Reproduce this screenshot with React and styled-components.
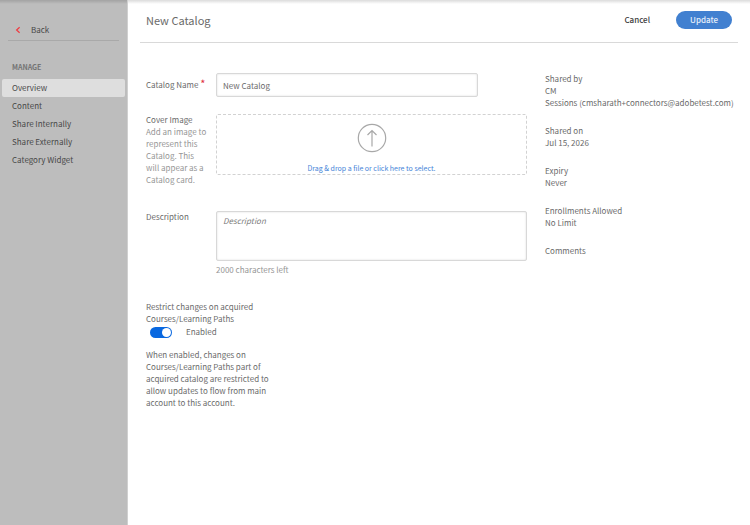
import { useState } from "react";
import styled, { createGlobalStyle } from "styled-components";

const GlobalStyle = createGlobalStyle`
    * {
        box-sizing: border-box;
    }
    body {
        margin: 0;
        background-color: #fff;
        color: #6a6a6a;
        font-family: "Noto Sans CJK SC", "Noto Sans", sans-serif;
        font-size: 8px;
        line-height: 12px;
    }
    input, textarea, button {
        font: inherit;
        color: inherit;
    }
`

const Container = styled.div`
    display: flex;
    min-height: 100vh;
    background: linear-gradient(rgba(0, 0, 0, 0.14), transparent) no-repeat top / 100% 4px;
`

const Sidebar = styled.nav`
    flex: 0 0 128px;
    padding-top: 24px;
    border-right: 1px solid #d0d0d0;
    background: linear-gradient(rgba(0, 0, 0, 0.14), transparent) no-repeat top / 100% 4px, #bdbdbd;
    color: #484848;
`

const Back = styled.a`
    display: flex;
    align-items: center;
    gap: 10px;
    margin: 0 8px;
    padding: 0 0 4px 7px;
    border-bottom: 1px solid #a9a9a9;
    color: inherit;
    text-decoration: none;
`

const MenuTitle = styled.h2`
    margin: 20px 0 6px 12px;
    color: #747474;
    font-size: 7px;
    line-height: 12px;
    font-weight: 700;
    text-transform: uppercase;
`

const Menu = styled.ul`
    margin: 0 2px;
    padding: 0;
    list-style: none;
`

const MenuLink = styled.a`
    display: block;
    padding: 3px 10px;
    border-radius: 2px;
    background-color: ${(props) => (props.$active ? "#dedede" : "transparent")};
    color: inherit;
    text-decoration: none;
`

const Main = styled.main`
    flex: 1;
    min-width: 0;
    padding: 0 12px;
`

const Header = styled.header`
    display: flex;
    align-items: center;
    height: 43px;
    padding: 0 6px 2px;
    border-bottom: 1px solid #d9d9d9;
`

const Title = styled.h1`
    margin: 0 auto 0 0;
    font-size: 11px;
    line-height: 16px;
    font-weight: 400;
`

const Button = styled.button`
    height: 18px;
    padding: 0 14px;
    border: none;
    border-radius: 9px;
    background-color: ${(props) => (props.$primary ? "#4180d0" : "transparent")};
    color: ${(props) => (props.$primary ? "#e6effa" : "#3c3c3c")};
    font-weight: 500;
    line-height: 18px;
    cursor: pointer;
`

const Actions = styled.div`
    display: flex;
    gap: 12px;
`

const Content = styled.div`
    display: grid;
    grid-template-columns: minmax(0, 381px) minmax(0, 1fr);
    column-gap: 18px;
    padding: 30px 6px;
`

const Field = styled.div`
    display: grid;
    grid-template-columns: 64px minmax(0, 1fr);
    column-gap: 6px;
    margin-bottom: ${(props) => props.$space};
`

const Label = styled.label`
    display: block;
    padding-top: ${(props) => (props.$centered ? "6px" : "0")};
    white-space: nowrap;
`

const Required = styled.span`
    color: #e0303a;
    font-size: 11px;
    line-height: 8px;
`

const Hint = styled.p`
    margin: 0;
    color: #969696;
`

const Counter = styled(Hint)`
    margin-top: 3px;
`

const Input = styled.input`
    width: 262px;
    max-width: 100%;
    height: 24px;
    padding: 0 6px;
    border: 1px solid #d8d8d8;
    border-radius: 2px;
    box-shadow: inset 0 0 2px #d8d8d8;
    outline: none;
`

const TextArea = styled.textarea`
    display: block;
    width: 100%;
    height: 50px;
    padding: 3px 6px;
    border: 1px solid #d8d8d8;
    border-radius: 2px;
    box-shadow: inset 0 0 2px #d8d8d8;
    outline: none;
    resize: none;
    &::placeholder {
        color: #7d7d7d;
        font-style: italic;
    }
`

const DropZone = styled.button`
    display: flex;
    flex-direction: column;
    align-items: center;
    justify-content: space-between;
    height: 61px;
    padding: 8px 0 0;
    border: 1px dashed #d2d2d2;
    border-radius: 2px;
    background-color: transparent;
    color: #4384d8;
    font-size: 7px;
    cursor: pointer;
`

const Restrict = styled.section`
    width: 126px;
`

const ToggleRow = styled.label`
    display: flex;
    align-items: center;
    gap: 14px;
    margin: 1px 0 11px;
    padding-left: 4px;
`

const Toggle = styled.input`
    display: flex;
    align-items: center;
    appearance: none;
    width: 22px;
    height: 11px;
    margin: 0;
    padding: 0 1px;
    border-radius: 6px;
    background-color: #a0a0a0;
    cursor: pointer;
    &::before {
        content: "";
        width: 9px;
        height: 9px;
        border-radius: 50%;
        background-color: #fff;
    }
    &:checked {
        justify-content: flex-end;
        background-color: #0968e0;
    }
`

const Text = styled.p`
    margin: 0;
`

const Details = styled.dl`
    margin: 0;
`

const Detail = styled.div`
    margin-bottom: 16px;
`

const Term = styled.dt`
`

const Value = styled.dd`
    margin: 0;
    white-space: nowrap;
`

const menu = ["Overview", "Content", "Share Internally", "Share Externally", "Category Widget"];

const details = [
    { term: "Shared by", values: ["CM", "Sessions (cmsharath+connectors@adobetest.com)"] },
    { term: "Shared on", values: ["Jul 15, 2026"] },
    { term: "Expiry", values: ["Never"] },
    { term: "Enrollments Allowed", values: ["No Limit"] },
    { term: "Comments", values: [] },
];

const MAX = 2000;

const App = () => {
    const [name, setName] = useState("New Catalog");
    const [description, setDescription] = useState("");
    const [restricted, setRestricted] = useState(true);

    return (
        <Container>
            <GlobalStyle />
            <Sidebar>
                <Back href="#">
                    <svg width="6" height="8" viewBox="0 0 6 8" fill="none" stroke="#f0383f" strokeWidth="1.2">
                        <path d="M4.6 1.2 1.6 4l3 2.8" />
                    </svg>
                    Back
                </Back>
                <MenuTitle>Manage</MenuTitle>
                <Menu>
                    {menu.map((item) => (
                        <li key={item}>
                            <MenuLink href="#" $active={item === "Overview"}>{item}</MenuLink>
                        </li>
                    ))}
                </Menu>
            </Sidebar>
            <Main>
                <Header>
                    <Title>New Catalog</Title>
                    <Actions>
                        <Button>Cancel</Button>
                        <Button $primary>Update</Button>
                    </Actions>
                </Header>
                <Content>
                    <form onSubmit={(e) => e.preventDefault()}>
                        <Field $space="17px">
                            <Label htmlFor="name" $centered>Catalog Name <Required>*</Required></Label>
                            <Input id="name" type="text" value={name} onChange={(e) => setName(e.target.value)} />
                        </Field>
                        <Field $space="25px">
                            <div>
                                <Label htmlFor="cover">Cover Image</Label>
                                <Hint>Add an image to represent this Catalog. This<br />will appear as a Catalog card.</Hint>
                            </div>
                            <DropZone id="cover" type="button">
                                <svg width="30" height="30" viewBox="0 0 30 30" fill="none" stroke="#a8a8a8">
                                    <circle cx="15" cy="15" r="13.7" strokeWidth="1.2" />
                                    <path d="M15 23.5V7.5M10.5 12 15 7.5l4.5 4.5" strokeWidth="1.2" />
                                </svg>
                                Drag &amp; drop a file or click here to select.
                            </DropZone>
                        </Field>
                        <Field $space="25px">
                            <Label htmlFor="description">Description</Label>
                            <div>
                                <TextArea id="description" placeholder="Description" maxLength={MAX}
                                value={description} onChange={(e) => setDescription(e.target.value)} />
                                <Counter>{MAX - description.length} characters left</Counter>
                            </div>
                        </Field>
                        <Restrict>
                            <Text>Restrict changes on acquired Courses/Learning Paths</Text>
                            <ToggleRow>
                                <Toggle type="checkbox" checked={restricted} onChange={(e) => setRestricted(e.target.checked)} />
                                {restricted ? "Enabled" : "Disabled"}
                            </ToggleRow>
                            <Text>
                                When enabled, changes on Courses/Learning Paths part of acquired catalog are
                                restricted to allow updates to flow from main account to this account.
                            </Text>
                        </Restrict>
                    </form>
                    <Details>
                        {details.map(({ term, values }) => (
                            <Detail key={term}>
                                <Term>{term}</Term>
                                {values.map((value) => <Value key={value}>{value}</Value>)}
                            </Detail>
                        ))}
                    </Details>
                </Content>
            </Main>
        </Container>
    );
}

export default App;
